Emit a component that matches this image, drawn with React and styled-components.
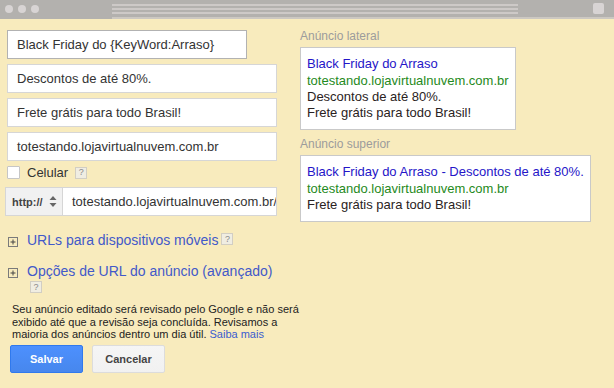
import React from "react";
import styled, { createGlobalStyle } from "styled-components";

const Global = createGlobalStyle`
  html, body { margin: 0; padding: 0; }
  body {
    background: #f8ebbd;
    font-family: "Liberation Sans", Arial, sans-serif;
    width: 614px;
    height: 388px;
    overflow: hidden;
  }
`;

const Window = styled.div`
  width: 614px;
  height: 388px;
  background: #f8ebbd;
  display: flex;
  flex-direction: column;
`;

const TitleBar = styled.div`
  display: flex;
  height: 19px;
  background: #b3b1ae;
  flex-shrink: 0;
`;

const Dots = styled.div`
  width: 112px;
  box-sizing: border-box;
  display: flex;
  gap: 5px;
  padding: 5px 0 0 5px;
`;

const Dot = styled.span`
  width: 8px;
  height: 8px;
  border-radius: 50%;
  background: #d8d4d4;
`;

const Address = styled.div`
  flex: 1;
  display: flex;
  height: 17px;
  border-bottom: 2px solid #ccc8c2;
`;

const Lines = styled.div`
  width: 406px;
  display: flex;
  flex-direction: column;
  gap: 2px;
  padding-top: 4px;
`;

const Line = styled.span`
  display: block;
  height: 2px;
  background: #cdc9c7;
`;

const Square = styled.span`
  margin: 3px 10px 0 auto;
  width: 11px;
  height: 11px;
  border-radius: 2px;
  background: #d8d4d4;
`;

const Content = styled.div`
  display: flex;
  gap: 23px;
  padding: 11px 0 0 7px;
`;

const LeftCol = styled.div`
  width: 270px;
  display: flex;
  flex-direction: column;
  align-items: flex-start;
`;

const Field = styled.div`
  box-sizing: border-box;
  width: ${(p) => (p.$narrow ? "240px" : "270px")};
  height: 29px;
  border: 1px solid ${(p) => (p.$focused ? "#b2b2b2" : "#d6d6d6")};
  background: #fff;
  padding: 0 9px;
  display: flex;
  align-items: center;
  font-size: 13px;
  color: #333;
  white-space: nowrap;
  & + & { margin-top: 5px; }
`;

const CheckRow = styled.div`
  display: flex;
  align-items: center;
  height: 13px;
  margin-top: 5px;
  font-size: 13px;
  color: #333;
`;

const Checkbox = styled.span`
  box-sizing: border-box;
  width: 13px;
  height: 13px;
  border: 1px solid #c6c6c6;
  border-radius: 1px;
  background: #fff;
`;

const CheckLabel = styled.span`
  margin: 0 7px;
`;

const Help = styled.span`
  box-sizing: border-box;
  display: inline-flex;
  align-items: center;
  justify-content: center;
  width: 12px;
  height: 12px;
  border: 1px solid #d2cec3;
  background: #f0ede2;
  color: #8a8a8a;
  font-size: 9px;
  line-height: 1;
  font-family: "Liberation Sans", Arial, sans-serif;
  vertical-align: top;
  margin: ${(p) => (p.$inline ? "1px 0 0 3px" : "0")};
`;

const UrlRow = styled.div`
  box-sizing: border-box;
  display: flex;
  width: 272px;
  height: 29px;
  margin: 8px 0 0 -2px;
  border: 1px solid #d6d6d6;
  background: #fff;
`;

const Protocol = styled.div`
  width: 57px;
  box-sizing: border-box;
  display: flex;
  align-items: center;
  padding: 0 5px 0 6px;
  background: #f1f1f1;
  border-right: 1px solid #d6d6d6;
  font-size: 11px;
  font-weight: bold;
  color: #444;
`;

const Arrows = styled.svg`
  margin-left: auto;
  display: block;
`;

const UrlText = styled.div`
  flex: 1;
  overflow: hidden;
  white-space: nowrap;
  display: flex;
  align-items: center;
  padding-left: 9px;
  font-size: 13px;
  color: #333;
`;

const Expander = styled.div`
  display: flex;
  align-items: flex-start;
  margin-top: ${(p) => (p.$first ? "16px" : "14px")};
`;

const PlusIcon = styled.svg`
  display: block;
  flex-shrink: 0;
  margin: 5px 0 0 1px;
`;

const ExpanderText = styled.div`
  width: 252px;
  margin-left: 9px;
  font-size: 14px;
  line-height: 17px;
  color: #4259c9;
`;

const Notice = styled.p`
  width: 290px;
  margin: 6px 0 0 5px;
  font-size: 11px;
  line-height: 12.5px;
  color: #222;
`;

const Link = styled.span`
  color: #3a5ccf;
`;

const Buttons = styled.div`
  display: flex;
  gap: 9px;
  margin: 4px 0 0 3px;
`;

const Button = styled.button`
  box-sizing: border-box;
  width: 73px;
  height: 28px;
  border-radius: 2px;
  font-family: "Liberation Sans", Arial, sans-serif;
  font-size: 11px;
  font-weight: bold;
  padding: 0;
  border: 1px solid ${(p) => (p.$primary ? "#3079ed" : "#dcdcdc")};
  background: ${(p) =>
    p.$primary
      ? "linear-gradient(#4d90fe, #4787ed)"
      : "linear-gradient(#f5f5f5, #f1f1f1)"};
  color: ${(p) => (p.$primary ? "#fff" : "#444")};
`;

const RightCol = styled.div`
  display: flex;
  flex-direction: column;
  align-items: flex-start;
`;

const PreviewLabel = styled.div`
  font-size: 12px;
  line-height: 13px;
  color: #9c9c9c;
  margin: ${(p) => (p.$later ? "8px 0 4px" : "0 0 4px")};
`;

const AdBox = styled.div`
  border: 1px solid #c9c9c9;
  background: #fff;
  padding: 6px 6px 8px;
  font-size: 13px;
  white-space: nowrap;
`;

const AdTitle = styled.div`
  line-height: 19px;
  color: #2515c8;
`;

const AdUrl = styled.div`
  line-height: 16px;
  color: #1f8a22;
`;

const AdText = styled.div`
  line-height: 16px;
  color: #2a2222;
`;

const Plus = () => (
  <PlusIcon width="10" height="10" viewBox="0 0 10 10">
    <rect x="0.5" y="0.5" width="9" height="9" fill="none" stroke="#7a7a7a" />
    <path d="M2.5 5H7.5M5 2.5V7.5" stroke="#444" strokeWidth="1" />
  </PlusIcon>
);

export default function App() {
  return (
    <Window>
      <Global />
      <TitleBar>
        <Dots>
          <Dot />
          <Dot />
          <Dot />
        </Dots>
        <Address>
          <Lines>
            <Line />
            <Line />
            <Line />
          </Lines>
          <Square />
        </Address>
      </TitleBar>
      <Content>
        <LeftCol>
          <Field $narrow $focused>Black Friday do {"{KeyWord:Arraso}"}</Field>
          <Field>Descontos de até 80%.</Field>
          <Field>Frete grátis para todo Brasil!</Field>
          <Field>totestando.lojavirtualnuvem.com.br</Field>
          <CheckRow>
            <Checkbox />
            <CheckLabel>Celular</CheckLabel>
            <Help>?</Help>
          </CheckRow>
          <UrlRow>
            <Protocol>
              http://
              <Arrows width="8" height="11" viewBox="0 0 8 11">
                <path d="M4 0L7.5 4H0.5Z" fill="#666" />
                <path d="M4 11L7.5 7H0.5Z" fill="#666" />
              </Arrows>
            </Protocol>
            <UrlText>totestando.lojavirtualnuvem.com.br/</UrlText>
          </UrlRow>
          <Expander $first>
            <Plus />
            <ExpanderText>
              URLs para dispositivos móveis{"\u200B"}
              <Help $inline>?</Help>
            </ExpanderText>
          </Expander>
          <Expander>
            <Plus />
            <ExpanderText>
              Opções de URL do anúncio (avançado){"\u200B"}
              <Help $inline>?</Help>
            </ExpanderText>
          </Expander>
          <Notice>
            Seu anúncio editado será revisado pelo Google e não será exibido até
            que a revisão seja concluída. Revisamos a maioria dos anúncios
            dentro um dia útil. <Link>Saiba mais</Link>
          </Notice>
          <Buttons>
            <Button $primary>Salvar</Button>
            <Button>Cancelar</Button>
          </Buttons>
        </LeftCol>
        <RightCol>
          <PreviewLabel>Anúncio lateral</PreviewLabel>
          <AdBox>
            <AdTitle>Black Friday do Arraso</AdTitle>
            <AdUrl>totestando.lojavirtualnuvem.com.br</AdUrl>
            <AdText>Descontos de até 80%.</AdText>
            <AdText>Frete grátis para todo Brasil!</AdText>
          </AdBox>
          <PreviewLabel $later>Anúncio superior</PreviewLabel>
          <AdBox>
            <AdTitle>Black Friday do Arraso - Descontos de até 80%.</AdTitle>
            <AdUrl>totestando.lojavirtualnuvem.com.br</AdUrl>
            <AdText>Frete grátis para todo Brasil!</AdText>
          </AdBox>
        </RightCol>
      </Content>
    </Window>
  );
}
